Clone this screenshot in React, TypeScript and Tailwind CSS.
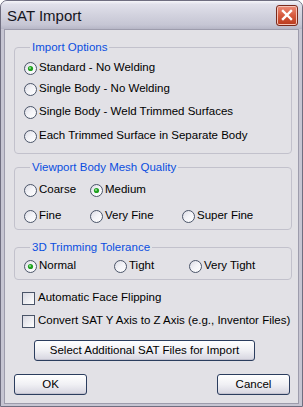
import React from "react";

const font = { fontFamily: '"Liberation Sans", Arial, sans-serif' };

function Radio({ checked, label }: { checked?: boolean; label: string }) {
  return (
    <div className="flex h-[16px] items-center">
      <svg width="13" height="13" viewBox="0 0 13 13" className="shrink-0">
        <defs>
          <linearGradient id="rg" x1="0" y1="0" x2="1" y2="1">
            <stop offset="0" stopColor="#d9d9e2" />
            <stop offset="0.5" stopColor="#f4f4f8" />
            <stop offset="1" stopColor="#ffffff" />
          </linearGradient>
        </defs>
        <circle cx="6.5" cy="6.5" r="6" fill="url(#rg)" stroke="#4a5468" strokeWidth="1" />
        {checked && (
          <>
            <circle cx="6.5" cy="6.5" r="2.6" fill="#21a121" />
            <circle cx="6" cy="6" r="1" fill="#8fe38f" />
          </>
        )}
      </svg>
      <span className="ml-[2px] text-[11.5px] text-black">{label}</span>
    </div>
  );
}

function Check({ label }: { label: string }) {
  return (
    <div className="flex h-[16px] items-center">
      <div className="h-[13px] w-[13px] shrink-0 border border-[#4a5468] bg-gradient-to-br from-[#d9d9e2] to-white" />
      <span className="ml-[3px] text-[11.5px] text-black">{label}</span>
    </div>
  );
}

function Group({ title, children, className }: { title: string; children: React.ReactNode; className?: string }) {
  return (
    <fieldset className={"w-[278px] rounded-[4px] border border-[#c2c1cc] pl-[9px] " + (className ?? "")}>
      <legend className="ml-[6px] px-[2px] text-[11.5px] leading-[14px] text-[#0a4ee0]">{title}</legend>
      {children}
    </fieldset>
  );
}

function Btn({ label, className }: { label: string; className?: string }) {
  return (
    <button
      className={
        "flex h-[21px] items-center justify-center rounded-[3px] border border-[#2b3d5e] bg-gradient-to-b from-white via-[#f0f0f4] to-[#d6d5e0] text-[11.5px] text-black shadow-[inset_0_-1px_0_#c4c3d0] " +
        (className ?? "")
      }
    >
      {label}
    </button>
  );
}

export default function App() {
  return (
    <div style={font} className="h-[407px] w-[303px] overflow-hidden rounded-t-[7px] border border-[#6f6e80] bg-[#c6c5d2]">
      {/* title bar */}
      <div className="flex h-[28px] items-center justify-between bg-[linear-gradient(to_bottom,#f6f6fa_0%,#e0e0ea_12%,#d2d2de_50%,#c6c6d4_85%,#b6b6c6_100%)] pl-[6px] pr-[4px]">
        <span className="text-[15px] leading-none text-[#151520]">SAT Import</span>
        <div className="flex h-[21px] w-[22px] items-center justify-center rounded-[3px] border border-[#7a2a1c] bg-gradient-to-b from-[#ec8c78] via-[#d65a3e] to-[#b8391c] shadow-[inset_0_0_0_1px_#f6c4b8]">
          <svg width="12" height="12" viewBox="0 0 12 12">
            <path d="M2 2 L10 10 M10 2 L2 10" stroke="white" strokeWidth="2.4" strokeLinecap="square" />
          </svg>
        </div>
      </div>
      {/* client */}
      <div className="mx-[3px] h-[375px] border border-[#9d9cac] bg-[#e2e1e6] pl-[9px]">
        <div className="h-[10px]" />
        <Group title="Import Options" className="pb-[9px]">
          <div className="mt-[6px]">
            <Radio checked label="Standard - No Welding" />
          </div>
          <div className="mt-[5px]">
            <Radio label="Single Body - No Welding" />
          </div>
          <div className="mt-[7px]">
            <Radio label="Single Body - Weld Trimmed Surfaces" />
          </div>
          <div className="mt-[8px]">
            <Radio label="Each Trimmed Surface in Separate Body" />
          </div>
        </Group>
        <Group title="Viewport Body Mesh Quality" className="mt-[6px] pb-[5px]">
          <div className="mt-[8px] flex">
            <div className="w-[66px]">
              <Radio label="Coarse" />
            </div>
            <Radio checked label="Medium" />
          </div>
          <div className="mt-[10px] flex">
            <div className="w-[66px]">
              <Radio label="Fine" />
            </div>
            <div className="w-[92px]">
              <Radio label="Very Fine" />
            </div>
            <Radio label="Super Fine" />
          </div>
        </Group>
        <Group title="3D Trimming Tolerance" className="mt-[10px] pb-[5px]">
          <div className="mt-[4px] flex">
            <div className="w-[90px]">
              <Radio checked label="Normal" />
            </div>
            <div className="w-[75px]">
              <Radio label="Tight" />
            </div>
            <Radio label="Very Tight" />
          </div>
        </Group>
        <div className="ml-[8px] mt-[10px]">
          <Check label="Automatic Face Flipping" />
        </div>
        <div className="ml-[8px] mt-[7px]">
          <Check label="Convert SAT Y Axis to Z Axis (e.g., Inventor Files)" />
        </div>
        <Btn label="Select Additional SAT Files for Import" className="ml-[20px] mt-[11px] w-[221px]" />
        <div className="mt-[13px] flex w-[276px] justify-between">
          <Btn label="OK" className="w-[73px]" />
          <Btn label="Cancel" className="w-[73px]" />
        </div>
      </div>
    </div>
  );
}
